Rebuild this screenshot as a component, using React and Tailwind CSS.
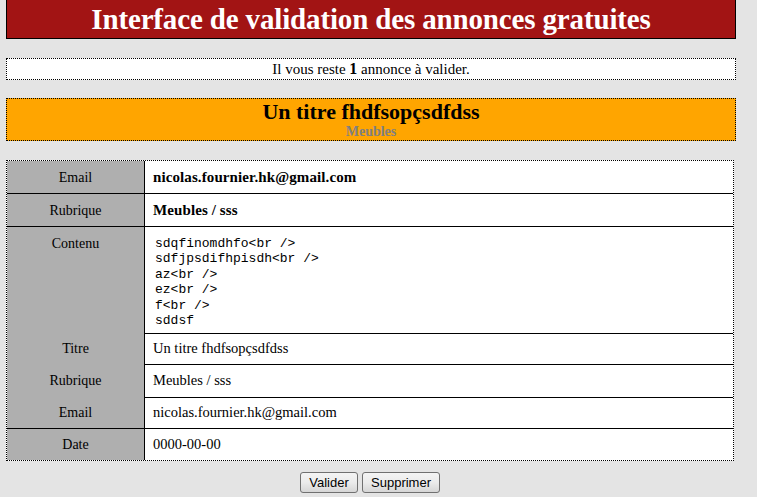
import React from "react";

const serif = { fontFamily: '"Liberation Serif", "Times New Roman", serif' };

function Row({ label, value, h, labelTop, valueTop, bold, top, mono }) {
  return (
    <div className={`flex ${h}`}>
      <div
        className={`w-[137px] shrink-0 bg-[#afafaf] text-center text-[14px] text-black ${labelTop ? "border-t border-black" : ""} ${top ? "pt-[9px] leading-[16px]" : "flex items-center justify-center"}`}
      >
        {label}
      </div>
      <div
        className={`flex-1 border-l border-black bg-white pl-[8px] text-black ${valueTop ? "border-t border-black" : ""} ${top ? "pt-[9px] pl-[10px]" : "flex items-center"} ${bold ? "font-bold text-[15px] tracking-[0.1px]" : "text-[14.5px]"}`}
      >
        {mono ? (
          <div
            className="text-[13px] leading-[15.4px] whitespace-pre"
            style={{ fontFamily: '"Liberation Mono", "Courier New", monospace' }}
          >
            {value}
          </div>
        ) : (
          value
        )}
      </div>
    </div>
  );
}

export default function App() {
  return (
    <div className="min-h-[497px] bg-[#e4e4e4] pb-2" style={serif}>
      <div className="ml-[6px] w-[730px] h-[39px] bg-[#a21414] border border-t-0 border-black flex items-center justify-center">
        <h1 className="text-white font-bold text-[29px] leading-none tracking-[-0.15px]">
          Interface de validation des annonces gratuites
        </h1>
      </div>

      <div className="ml-[6px] mt-[19px] w-[730px] h-[22px] bg-white border border-dotted border-black flex items-center justify-center text-[15px] text-black">
        <span>
          Il vous reste <b className="text-[16px]">1</b> annonce à valider.
        </span>
      </div>

      <div className="ml-[6px] mt-[18px] w-[730px] h-[43px] bg-[#ffa500] border border-dotted border-black flex flex-col items-center">
        <div className="font-bold text-[22px] leading-[26px] text-black">
          Un titre fhdfsopçsdfdss
        </div>
        <div className="font-bold text-[14px] leading-[14px] text-[#808080]">
          Meubles
        </div>
      </div>

      <div className="ml-[6px] mt-[19px] w-[728px] border border-dotted border-black bg-white">
        <Row label="Email" value="nicolas.fournier.hk@gmail.com" h="h-[32px]" bold />
        <Row label="Rubrique" value="Meubles / sss" h="h-[33px]" bold labelTop valueTop />
        <Row
          label="Contenu"
          value={"sdqfinomdhfo<br />\nsdfjpsdifhpisdh<br />\naz<br />\nez<br />\nf<br />\nsddsf"}
          h="h-[107px]"
          labelTop
          valueTop
          top
          mono
        />
        <Row label="Titre" value="Un titre fhdfsopçsdfdss" h="h-[31px]" valueTop />
        <Row label="Rubrique" value="Meubles / sss" h="h-[33px]" valueTop />
        <Row label="Email" value="nicolas.fournier.hk@gmail.com" h="h-[31px]" valueTop />
        <Row label="Date" value="0000-00-00" h="h-[32px]" labelTop valueTop />
      </div>

      <div
        className="ml-[6px] w-[728px] mt-[11px] flex justify-center gap-[4px]"
        style={{ fontFamily: '"Liberation Sans", Arial, sans-serif' }}
      >
        <button className="h-[21px] w-[58px] text-[13px] text-black rounded-[3px] border border-[#707070] bg-gradient-to-b from-[#f4f4f4] via-[#ebebeb] to-[#d6d6d6]">
          Valider
        </button>
        <button className="h-[21px] w-[78px] text-[13px] text-black rounded-[3px] border border-[#707070] bg-gradient-to-b from-[#f4f4f4] via-[#ebebeb] to-[#d6d6d6]">
          Supprimer
        </button>
      </div>
    </div>
  );
}
